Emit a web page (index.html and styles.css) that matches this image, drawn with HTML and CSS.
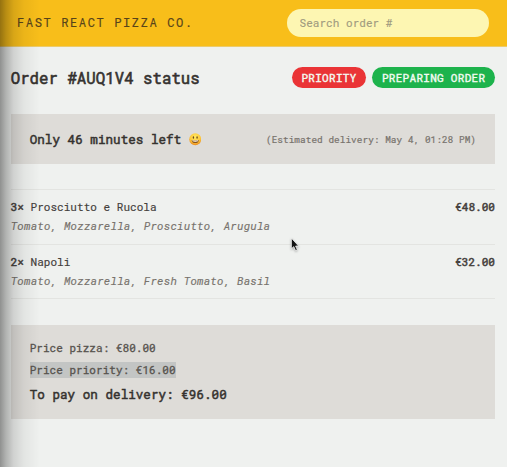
FILE: index.html
```
<!DOCTYPE html>
<html lang="en">
<head>
<meta charset="utf-8">
<title>Fast React Pizza Co.</title>
<link rel="stylesheet" href="styles.css">
</head>
<body>
<header class="header">
  <a class="brand">Fast React Pizza Co.</a>
  <input class="search" placeholder="Search order #" aria-label="Search order">
</header>
<main class="order">
  <div class="title-row">
    <h1>Order #AUQ1V4 status</h1>
    <div class="badges">
      <span class="badge priority">Priority</span>
      <span class="badge preparing">Preparing order</span>
    </div>
  </div>
  <section class="panel delivery">
    <p class="strong">Only 46 minutes left
      <svg class="smile" viewBox="0 0 24 24" role="img" aria-label="smile">
        <defs><radialGradient id="face" cx="50%" cy="32%" r="68%"><stop offset="0" stop-color="#ffec62"/><stop offset=".65" stop-color="#fdc63a"/><stop offset="1" stop-color="#e8871e"/></radialGradient></defs>
        <circle cx="12" cy="12" r="11.5" fill="url(#face)"/>
        <ellipse cx="8.5" cy="8.5" rx="1.3" ry="2.5" fill="#6b451d"/>
        <ellipse cx="15.5" cy="8.5" rx="1.3" ry="2.5" fill="#6b451d"/>
        <path d="M5 13.2Q12 15 19 13.2Q18 19.4 12 19.4T5 13.2Z" fill="#8a5519"/>
        <path d="M6.2 13.8Q12 15.2 17.8 13.8L17 16Q12 17.2 7 16Z" fill="#fff"/>
      </svg>
    </p>
    <p class="estimate">(Estimated delivery: May 4, 01:28 PM)</p>
  </section>
  <ul class="items">
    <li>
      <div class="item-line"><p><b>3×</b> Prosciutto e Rucola</p><b>€48.00</b></div>
      <p class="ingredients">Tomato, Mozzarella, Prosciutto, Arugula</p>
    </li>
    <li>
      <div class="item-line"><p><b>2×</b> Napoli</p><b>€32.00</b></div>
      <p class="ingredients">Tomato, Mozzarella, Fresh Tomato, Basil</p>
    </li>
  </ul>
  <section class="panel totals">
    <p class="price">Price pizza: €80.00</p>
    <p class="price"><span class="selected">Price priority: €16.00</span></p>
    <p class="strong">To pay on delivery: €96.00</p>
  </section>
</main>
<div class="edge-shade"></div>
<svg class="pointer" viewBox="0 0 12 17"><path d="M1.5 1V12.6L4.1 10.3L6.1 14.6L8 13.7L6.1 9.6H9.4Z" fill="#111" stroke="#fff" stroke-width=".8"/></svg>
</body>
</html>
```
FILE: styles.css
```
* { box-sizing: border-box; margin: 0; padding: 0; }
body {
  position: relative;
  height: 467px;
  overflow: hidden;
  background: #eff1ef;
  color: #44403c;
  font: 11px/19px "Roboto Mono", "DejaVu Sans Mono", monospace;
}
.header {
  display: flex;
  align-items: center;
  justify-content: space-between;
  height: 47px;
  padding: 0 18px 1px 17px;
  background: #f8be1a;
  border-bottom: 1px solid #eccb6b;
}
.brand {
  font-size: 12.2px;
  letter-spacing: 1.52px;
  text-transform: uppercase;
  color: #57441a;
  -webkit-text-stroke: .15px;
}
.search {
  width: 202px;
  height: 28px;
  padding: 0 12.5px;
  border: 0;
  border-radius: 14px;
  background: #fdf6b2;
  font: inherit;
  letter-spacing: .04px;
}
.search::placeholder { color: #a19b80; -webkit-text-stroke: .15px; }
.order { padding: 19px 12px 0 10.7px; }
.title-row { display: flex; align-items: center; justify-content: space-between; height: 24px; }
h1 { font-size: 15.7px; line-height: 22px; font-weight: 400; letter-spacing: .04px; color: #35322f; -webkit-text-stroke: .6px; }
.badges { display: flex; gap: 6px; margin-top: -1px; }
.badge {
  height: 21px;
  line-height: 21px;
  padding: 0 9.7px;
  border-radius: 11px;
  font-size: 11px;
  letter-spacing: .29px;
  text-transform: uppercase;
  color: #f4fbf3;
  -webkit-text-stroke: .4px;
}
.priority { background: #ea3436; }
.preparing { background: #1db34c; }
.panel { background: #dedcd8; padding: 0 19px; }
.delivery {
  display: flex;
  align-items: center;
  justify-content: space-between;
  height: 50px;
  margin-top: 24px;
}
.strong { font-size: 12.57px; letter-spacing: .04px; color: #35322f; -webkit-text-stroke: .5px; }
.smile { width: 12.5px; height: 12.5px; vertical-align: -2px; stroke: none; }
.estimate { font-size: 9.4px; letter-spacing: .05px; color: #78736d; -webkit-text-stroke: .2px; }
.items { list-style: none; margin-top: 25px; border-top: 1px solid #e3e4e1; }
.items li { height: 54.5px; padding-top: 7.2px; border-bottom: 1px solid #e3e4e1; }
.item-line { display: flex; justify-content: space-between; letter-spacing: .03px; -webkit-text-stroke: .15px; }
b { font-weight: 400; -webkit-text-stroke: .5px; }
.ingredients { font-style: italic; letter-spacing: .2px; color: #78736d; -webkit-text-stroke: .15px; }
.totals { height: 94px; margin-top: 25.5px; padding-top: 13.5px; }
.price { margin-bottom: 3px; letter-spacing: .03px; color: #57534e; -webkit-text-stroke: .3px; }
.totals .strong { padding-top: 2.5px; }
.selected { display: inline-block; height: 16px; line-height: 16px; background: #c3c5c4; }
.edge-shade {
  position: absolute;
  inset: 0 auto 0 0;
  width: 40px;
  background: linear-gradient(90deg, rgba(0,0,0,.4), rgba(0,0,0,.26) 15%, rgba(0,0,0,.13) 34%, rgba(0,0,0,.05) 60%, transparent);
  pointer-events: none;
}
.pointer { position: absolute; left: 290px; top: 237px; width: 11px; height: 16px; filter: drop-shadow(0 1px 1px rgba(0,0,0,.3)); }
```
